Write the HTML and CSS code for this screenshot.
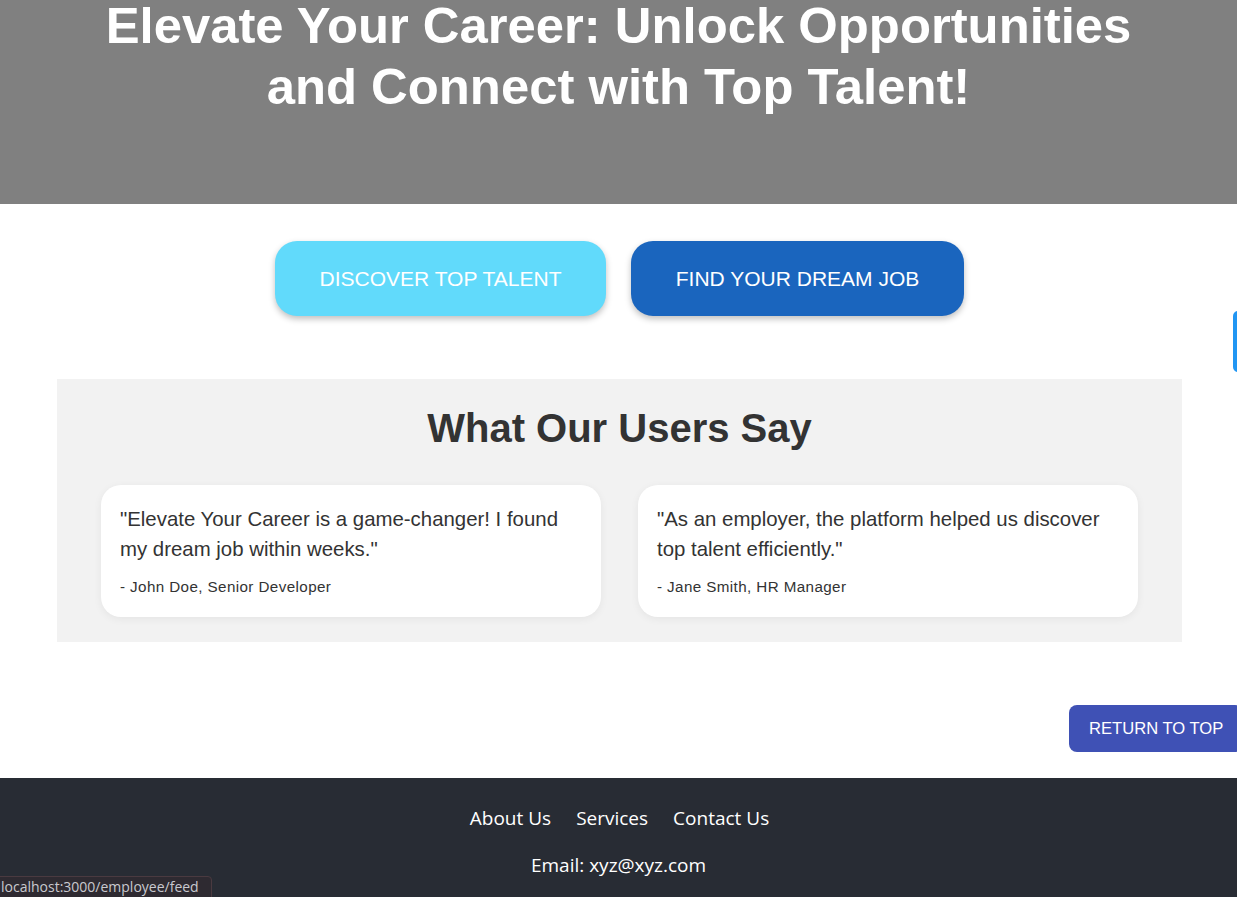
FILE: index.html
```html
<!DOCTYPE html>
<html lang="en">
<head>
<meta charset="utf-8">
<title>Elevate Your Career</title>
<link rel="stylesheet" href="styles.css">
</head>
<body>
<div class="page">
  <header class="hero">
    <h1 class="hero-title">Elevate Your Career: Unlock Opportunities and Connect with Top Talent!</h1>
  </header>

  <div class="actions">
    <button class="btn btn-talent">DISCOVER TOP TALENT</button>
    <button class="btn btn-job">FIND YOUR DREAM JOB</button>
  </div>

  <section class="testimonials">
    <h2 class="testimonials-title">What Our Users Say</h2>
    <div class="cards">
      <div class="card">
        <p class="quote">"Elevate Your Career is a game-changer! I found my dream job within weeks."</p>
        <p class="author">- John Doe, Senior Developer</p>
      </div>
      <div class="card">
        <p class="quote">"As an employer, the platform helped us discover top talent efficiently."</p>
        <p class="author">- Jane Smith, HR Manager</p>
      </div>
    </div>
  </section>

  <div class="return-row">
    <button class="return-btn">RETURN TO TOP</button>
  </div>

  <footer class="footer">
    <nav class="footer-links">
      <a href="#">About Us</a>
      <a href="#">Services</a>
      <a href="#">Contact Us</a>
    </nav>
    <p class="footer-email">Email: xyz@xyz.com</p>
  </footer>

  <div class="side-tab"></div>
  <div class="status">localhost:3000/employee/feed</div>
</div>
</body>
</html>
```

FILE: styles.css
```css
html, body {
  margin: 0;
  padding: 0;
  overflow: hidden;
}
body {
  font-family: "Liberation Sans", Arial, sans-serif;
  background: #ffffff;
}
.page {
  position: relative;
  width: 1237px;
  height: 897px;
  overflow: hidden;
}
.hero {
  background: #808080;
  height: 204px;
  box-sizing: border-box;
  padding: 0 60px;
  overflow: hidden;
}
.hero-title {
  margin: -5px 0 0;
  color: #ffffff;
  font-size: 50.8px;
  line-height: 61px;
  font-weight: 700;
  text-align: center;
}
.actions {
  display: flex;
  justify-content: center;
  gap: 25px;
  padding-top: 37px;
  padding-left: 2px;
}
.btn {
  height: 75px;
  border: none;
  border-radius: 22px;
  font-family: "Liberation Sans", Arial, sans-serif;
  font-size: 21px;
  font-weight: 400;
  color: #ffffff;
  box-shadow: 0 3px 6px rgba(0,0,0,0.25);
  cursor: pointer;
}
.btn-talent {
  width: 331px;
  background: #61dafb;
}
.btn-job {
  width: 333px;
  background: #1a65be;
}
.testimonials {
  width: 1125px;
  margin: 63px 0 0 57px;
  background: #f2f2f2;
  box-sizing: border-box;
  padding: 22px 44px 25px;
}
.testimonials-title {
  margin: 0 0 30px;
  text-align: center;
  font-size: 40px;
  line-height: 54px;
  font-weight: 700;
  color: #333333;
}
.cards {
  display: flex;
  gap: 37px;
}
.card {
  width: 500px;
  height: 132px;
  box-sizing: border-box;
  background: #ffffff;
  border-radius: 20px;
  padding: 19px 19px 0;
  box-shadow: 0 2px 8px rgba(0,0,0,0.06);
}
.quote {
  margin: 0;
  font-size: 20.4px;
  line-height: 30px;
  color: #333333;
}
.author {
  margin: 14px 0 0;
  font-size: 15.2px;
  line-height: 18px;
  letter-spacing: 0.4px;
  color: #333333;
}
.return-row {
  display: flex;
  justify-content: flex-end;
  margin-top: 63px;
  height: 47px;
  margin-right: -6px;
}
.return-btn {
  width: 174px;
  height: 47px;
  border: none;
  border-radius: 8px;
  background: #3f51b5;
  color: #ffffff;
  font-family: "Liberation Sans", Arial, sans-serif;
  font-size: 16.6px;
  text-align: left;
  padding: 0 0 0 20px;
  cursor: pointer;
}
.footer {
  margin-top: 26px;
  background: #282c34;
  height: 200px;
  padding-top: 27px;
  box-sizing: border-box;
  text-align: center;
  font-family: "Open Sans", "Noto Sans", sans-serif;
  color: #ffffff;
}
.footer-links {
  display: flex;
  justify-content: center;
  gap: 25px;
  padding-left: 2px;
}
.footer-links a {
  color: #ffffff;
  text-decoration: none;
  font-size: 19px;
  line-height: 26px;
}
.footer-email {
  margin: 21px 0 0;
  font-size: 19px;
  line-height: 26px;
}
.side-tab {
  position: absolute;
  left: 1233px;
  top: 311px;
  width: 10px;
  height: 61px;
  border-radius: 5px;
  background: #2196f3;
}
.status {
  position: absolute;
  left: -1px;
  bottom: -3px;
  height: 22px;
  padding: 0 12px 0 1px;
  background: #2e2a31;
  border: 1px solid #4a3a40;
  border-radius: 0 4px 0 0;
  font-family: "Open Sans", "Noto Sans", sans-serif;
  font-size: 14px;
  line-height: 20px;
  color: #c9c9cf;
}
```
